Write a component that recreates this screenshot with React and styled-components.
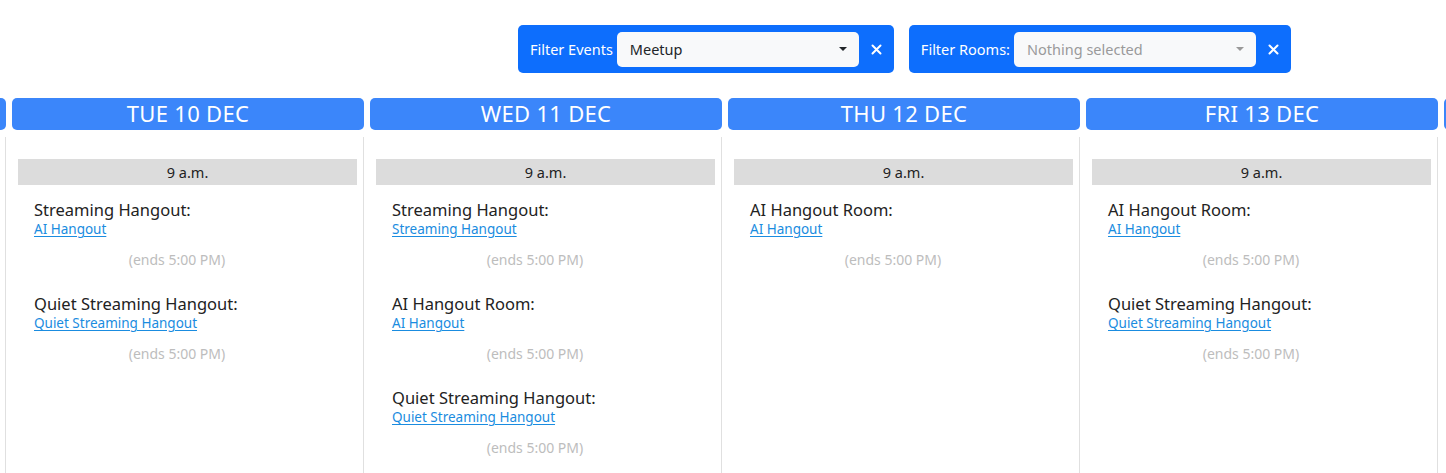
import React, { useLayoutEffect, useRef } from "react"
import styled, { createGlobalStyle } from "styled-components"

const Global = createGlobalStyle`
  html, body { margin: 0; padding: 0; background: #fff; }
  body { font-family: "Noto Sans", "Open Sans", sans-serif; color: #212529; overflow: hidden; }
  * { box-sizing: border-box; }
`

const Page = styled.div`
  width: 1446px;
  height: 473px;
  overflow: hidden;
`

const FilterRow = styled.div`
  display: flex;
  justify-content: flex-end;
  gap: 15px;
  padding: 25px 155px 0 0;
  height: 73px;
`

const FilterBox = styled.div`
  display: flex;
  align-items: center;
  height: 48px;
  padding: 0 0 0 12px;
  background: #0d6efd;
  border-radius: 5px;
`

const FilterLabel = styled.span`
  color: #fff;
  font-size: 14.5px;
  margin-right: 4px;
  white-space: nowrap;
`

const Select = styled.div`
  position: relative;
  display: flex;
  align-items: center;
  width: 242px;
  height: 35px;
  padding: 0 13px;
  background: #f8f9fa;
  border-radius: 5px;
  font-size: 14.5px;
  color: ${p => (p.$empty ? "#9a9a9a" : "#212529")};
`

const Caret = styled.span`
  position: absolute;
  right: 12px;
  top: 15px;
  width: 0;
  height: 0;
  border-left: 4px solid transparent;
  border-right: 4px solid transparent;
  border-top: 4px solid ${p => (p.$empty ? "#999" : "#212529")};
`

const Clear = styled.button`
  width: 35px;
  height: 48px;
  border: 0;
  background: none;
  padding: 0;
  display: flex;
  align-items: center;
  justify-content: center;
  cursor: pointer;
`

const Strip = styled.div`
  display: flex;
  align-items: stretch;
  gap: 6px;
  padding: 25px 12px 0;
  overflow-x: auto;
  overflow-y: hidden;
  scrollbar-width: none;
  height: 400px;
  &::-webkit-scrollbar { display: none; }
`

const Column = styled.div`
  flex: 0 0 352px;
  display: flex;
  flex-direction: column;
  min-height: 0;
  overflow: hidden;
`

const DayHeader = styled.div`
  flex: 0 0 32px;
  background: #3b86fa;
  border-radius: 5px;
  color: #fff;
  font-size: 22px;
  line-height: 30px;
  text-align: center;
  letter-spacing: 0.3px;
`

const DayBody = styled.div`
  flex: 1 1 auto;
  min-height: 0;
  overflow: hidden;
  margin-top: 7px;
  border-right: 1px solid #e0e0e0;
  padding: 22px 6px 0 6px;
`

const TimeBar = styled.div`
  height: 26px;
  background: #dcdcdc;
  text-align: center;
  font-size: 14.5px;
  line-height: 26px;
  color: #222;
`

const EventList = styled.div`
  padding: 15px 37px 0 16px;
`

const Event = styled.div`
  margin-bottom: 25px;
`

const Title = styled.div`
  font-size: 16.5px;
  line-height: 20px;
  color: #222;
`

const RoomLink = styled.a`
  display: block;
  width: fit-content;
  white-space: nowrap;
  font-size: 13.5px;
  line-height: 19px;
  color: #1a8ce0;
  text-decoration: underline;
  text-underline-offset: 2px;
`

const Ends = styled.div`
  margin-top: 12px;
  text-align: center;
  font-size: 14px;
  line-height: 18px;
  color: #bdbdbd;
`

const X = () => (
  <svg width="11" height="11" viewBox="0 0 11 11">
    <path d="M1.5 1.5 L9.5 9.5 M9.5 1.5 L1.5 9.5" stroke="#fff" strokeWidth="2" strokeLinecap="round" />
  </svg>
)

const days = [
  { label: "MON 9 DEC", events: [] },
  {
    label: "TUE 10 DEC",
    events: [
      ["Streaming Hangout:", "AI Hangout"],
      ["Quiet Streaming Hangout:", "Quiet Streaming Hangout"],
    ],
  },
  {
    label: "WED 11 DEC",
    events: [
      ["Streaming Hangout:", "Streaming Hangout"],
      ["AI Hangout Room:", "AI Hangout"],
      ["Quiet Streaming Hangout:", "Quiet Streaming Hangout"],
    ],
  },
  { label: "THU 12 DEC", events: [["AI Hangout Room:", "AI Hangout"]] },
  {
    label: "FRI 13 DEC",
    events: [
      ["AI Hangout Room:", "AI Hangout"],
      ["Quiet Streaming Hangout:", "Quiet Streaming Hangout"],
    ],
  },
  { label: "SAT 14 DEC", events: [] },
]

export default function App() {
  const strip = useRef(null)
  useLayoutEffect(() => {
    if (strip.current) strip.current.scrollLeft = 358
  }, [])

  return (
    <Page>
      <Global />
      <FilterRow>
        <FilterBox>
          <FilterLabel>Filter Events</FilterLabel>
          <Select>
            Meetup
            <Caret />
          </Select>
          <Clear><X /></Clear>
        </FilterBox>
        <FilterBox>
          <FilterLabel>Filter Rooms:</FilterLabel>
          <Select $empty>
            Nothing selected
            <Caret $empty />
          </Select>
          <Clear><X /></Clear>
        </FilterBox>
      </FilterRow>
      <Strip ref={strip}>
        {days.map(d => (
          <Column key={d.label}>
            <DayHeader>{d.label}</DayHeader>
            <DayBody>
              {d.events.length > 0 && <TimeBar>9 a.m.</TimeBar>}
              <EventList>
                {d.events.map(([t, r]) => (
                  <Event key={t}>
                    <Title>{t}</Title>
                    <RoomLink href="#">{r}</RoomLink>
                    <Ends>(ends 5:00 PM)</Ends>
                  </Event>
                ))}
              </EventList>
            </DayBody>
          </Column>
        ))}
      </Strip>
    </Page>
  )
}
